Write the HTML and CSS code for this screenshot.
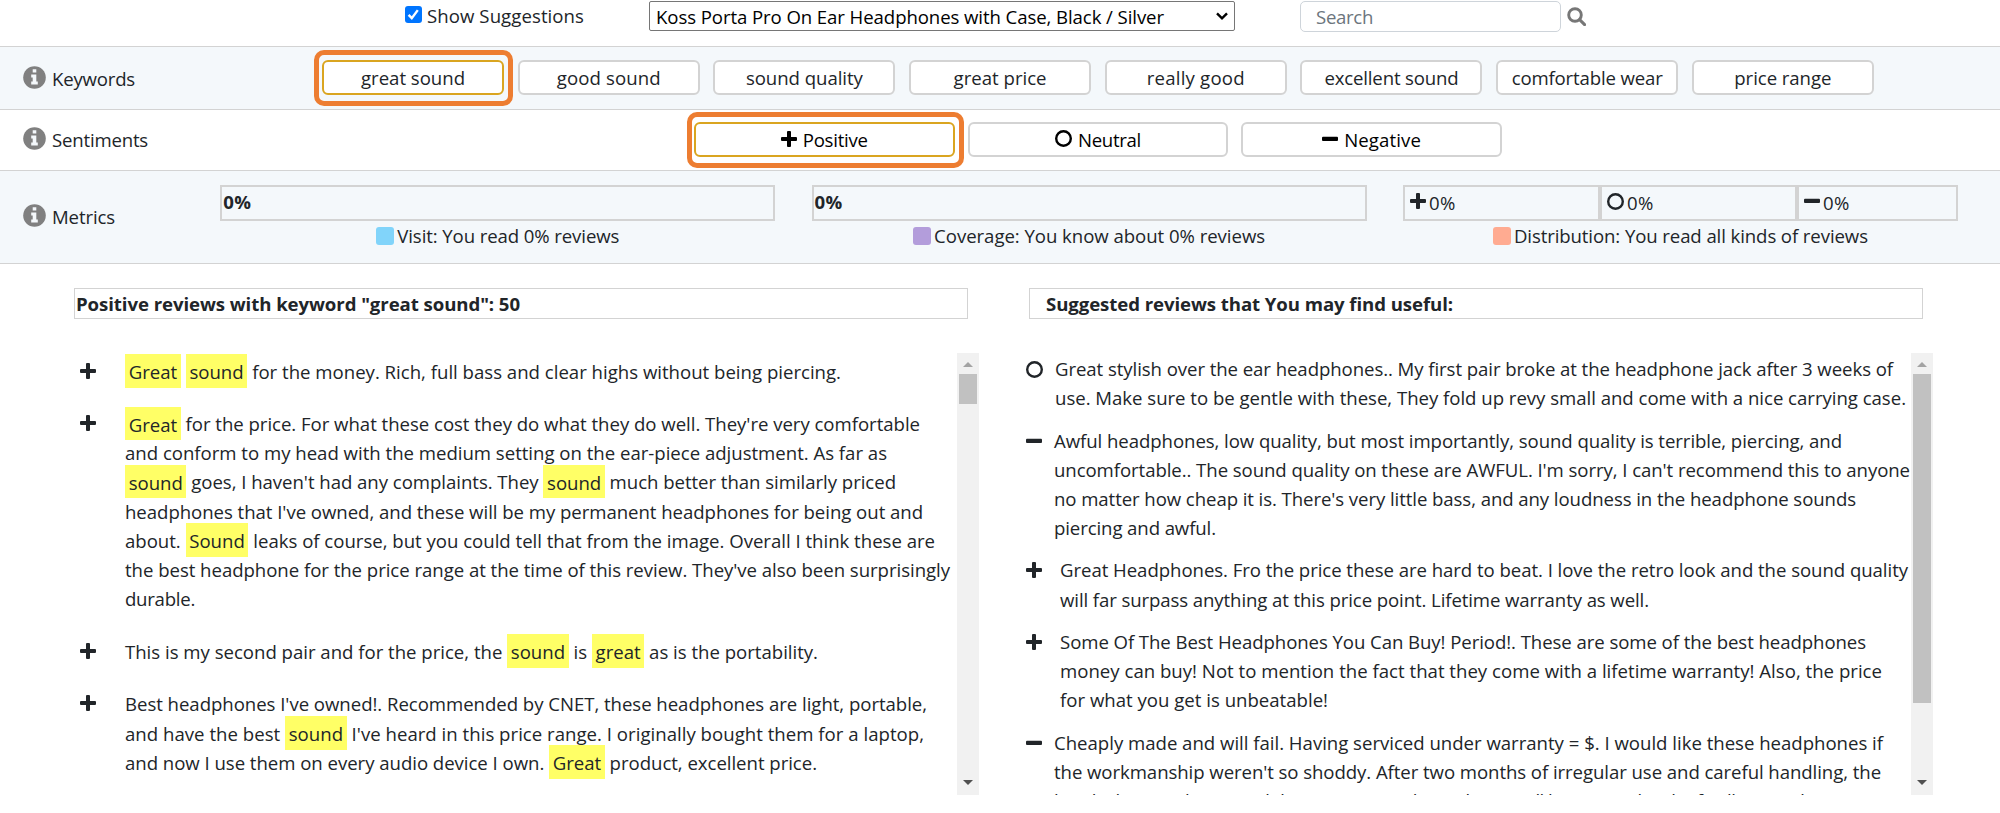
FILE: index.html
```html
<!DOCTYPE html>
<html lang="en">
<head>
<meta charset="utf-8">
<title>Review explorer</title>
<link rel="stylesheet" href="styles.css">
</head>
<body>
<svg class="defs" aria-hidden="true">
  <symbol id="info" viewBox="0 0 23 23"><circle cx="11.5" cy="11.5" r="11.3" fill="#808080"/><path d="M9.7 3.2h3.6v3.2H9.7zM8.2 8.6h5.1v7h1.5v2.8H8.2v-2.8h1.5v-4.2H8.2z" fill="#f4f8fb"/></symbol>
  <symbol id="plus" viewBox="0 0 16 16"><path d="M6 1a1 1 0 0 1 1-1h2a1 1 0 0 1 1 1v5h5a1 1 0 0 1 1 1v2a1 1 0 0 1-1 1h-5v5a1 1 0 0 1-1 1H7a1 1 0 0 1-1-1v-5H1a1 1 0 0 1-1-1V7a1 1 0 0 1 1-1h5z"/></symbol>
  <symbol id="minus" viewBox="0 0 16 16"><rect y="5.8" width="16" height="4.3" rx="1"/></symbol>
  <symbol id="ring" viewBox="0 0 17 17"><circle cx="8.5" cy="8.5" r="7.3" fill="none" stroke="currentColor" stroke-width="2.4"/></symbol>
</svg>

<header class="topbar">
  <label class="suggest"><span class="check"><svg viewBox="0 0 17 17"><path d="M3.6 8.8l3.2 3.3 6-8" fill="none" stroke="#fff" stroke-width="2.4"/></svg></span><span data-w="157">Show Suggestions</span></label>
  <div class="select"><span data-w="508">Koss Porta Pro On Ear Headphones with Case, Black / Silver</span><svg class="chev" viewBox="0 0 12 8"><path d="M1 1.3l5 5 5-5" fill="none" stroke="#000" stroke-width="2.4"/></svg></div>
  <div class="search"><span data-w="57">Search</span></div>
  <svg class="glass" viewBox="0 0 19 19"><circle cx="8" cy="8" r="6.3" fill="none" stroke="#777" stroke-width="2.9"/><path d="M12.6 12.6l5 5" stroke="#777" stroke-width="3" stroke-linecap="round"/></svg>
</header>

<section class="row tint keywords">
  <div class="label"><svg class="info"><use href="#info"/></svg><span data-w="83">Keywords</span></div>
  <div class="buttons">
    <div class="btn on"><span data-w="104">great sound</span></div>
    <div class="btn"><span data-w="104">good sound</span></div>
    <div class="btn"><span data-w="117">sound quality</span></div>
    <div class="btn"><span data-w="93">great price</span></div>
    <div class="btn"><span data-w="98">really good</span></div>
    <div class="btn"><span data-w="134">excellent sound</span></div>
    <div class="btn"><span data-w="151">comfortable wear</span></div>
    <div class="btn"><span data-w="97">price range</span></div>
  </div>
</section>

<section class="row sentiments">
  <div class="label"><svg class="info"><use href="#info"/></svg><span data-w="96">Sentiments</span></div>
  <div class="buttons wide">
    <div class="btn on"><svg class="ic"><use href="#plus"/></svg><span data-w="65">Positive</span></div>
    <div class="btn"><svg class="ic ring"><use href="#ring"/></svg><span data-w="63">Neutral</span></div>
    <div class="btn"><svg class="ic"><use href="#minus"/></svg><span data-w="77">Negative</span></div>
  </div>
</section>

<section class="row tint metrics">
  <div class="label"><svg class="info"><use href="#info"/></svg><span data-w="63">Metrics</span></div>
  <div class="metric">
    <div class="bar"><b data-w="28">0%</b></div>
    <div class="legend"><i class="sw blue"></i><span data-w="222">Visit: You read 0% reviews</span></div>
  </div>
  <div class="metric">
    <div class="bar"><b data-w="28">0%</b></div>
    <div class="legend"><i class="sw purple"></i><span data-w="331">Coverage: You know about 0% reviews</span></div>
  </div>
  <div class="metric">
    <div class="bar split">
      <div class="cell"><svg class="ic"><use href="#plus"/></svg><span data-w="27">0%</span></div>
      <div class="cell"><svg class="ic ring"><use href="#ring"/></svg><span data-w="27">0%</span></div>
      <div class="cell"><svg class="ic"><use href="#minus"/></svg><span data-w="27">0%</span></div>
    </div>
    <div class="legend"><i class="sw salmon"></i><span data-w="354">Distribution: You read all kinds of reviews</span></div>
  </div>
</section>

<main class="columns">
  <section class="col left">
    <h2><span data-w="444">Positive reviews with keyword "great sound": 50</span></h2>
    <div class="panel">
      <div class="list">
        <article><svg class="ic"><use href="#plus"/></svg><p>
          <span data-w="716"><mark>Great</mark> <mark>sound</mark> for the money. Rich, full bass and clear highs without being piercing.</span></p></article>
        <article><svg class="ic"><use href="#plus"/></svg><p>
          <span data-w="795"><mark>Great</mark> for the price. For what these cost they do what they do well. They're very comfortable</span>
          <span data-w="762">and conform to my head with the medium setting on the ear-piece adjustment. As far as</span>
          <span data-w="771"><mark>sound</mark> goes, I haven't had any complaints. They <mark>sound</mark> much better than similarly priced</span>
          <span data-w="798">headphones that I've owned, and these will be my permanent headphones for being out and</span>
          <span data-w="810">about. <mark>Sound</mark> leaks of course, but you could tell that from the image. Overall I think these are</span>
          <span data-w="825">the best headphone for the price range at the time of this review. They've also been surprisingly</span>
          <span data-w="70">durable.</span></p></article>
        <article><svg class="ic"><use href="#plus"/></svg><p>
          <span data-w="693">This is my second pair and for the price, the <mark>sound</mark> is <mark>great</mark> as is the portability.</span></p></article>
        <article><svg class="ic"><use href="#plus"/></svg><p>
          <span data-w="802">Best headphones I've owned!. Recommended by CNET, these headphones are light, portable,</span>
          <span data-w="799">and have the best <mark>sound</mark> I've heard in this price range. I originally bought them for a laptop,</span>
          <span data-w="692">and now I use them on every audio device I own. <mark>Great</mark> product, excellent price.</span></p></article>
      </div>
      <div class="scroll"><svg class="up" viewBox="0 0 10 5"><path d="M0 5l5-5 5 5z"/></svg><div class="thumb short"></div><svg class="down" viewBox="0 0 10 5"><path d="M0 0l5 5 5-5z"/></svg></div>
    </div>
  </section>
  <section class="col right">
    <h2><span data-w="407">Suggested reviews that You may find useful:</span></h2>
    <div class="panel">
      <div class="list">
        <article class="neu"><svg class="ic ring"><use href="#ring"/></svg><p>
          <span data-w="838">Great stylish over the ear headphones.. My first pair broke at the headphone jack after 3 weeks of</span>
          <span data-w="851">use. Make sure to be gentle with these, They fold up revy small and come with a nice carrying case.</span></p></article>
        <article class="neg"><svg class="ic"><use href="#minus"/></svg><p>
          <span data-w="788">Awful headphones, low quality, but most importantly, sound quality is terrible, piercing, and</span>
          <span data-w="856">uncomfortable.. The sound quality on these are AWFUL. I'm sorry, I can't recommend this to anyone</span>
          <span data-w="802">no matter how cheap it is. There's very little bass, and any loudness in the headphone sounds</span>
          <span data-w="162">piercing and awful.</span></p></article>
        <article><svg class="ic"><use href="#plus"/></svg><p>
          <span data-w="848">Great Headphones. Fro the price these are hard to beat. I love the retro look and the sound quality</span>
          <span data-w="589">will far surpass anything at this price point. Lifetime warranty as well.</span></p></article>
        <article><svg class="ic"><use href="#plus"/></svg><p>
          <span data-w="806">Some Of The Best Headphones You Can Buy! Period!. These are some of the best headphones</span>
          <span data-w="822">money can buy! Not to mention the fact that they come with a lifetime warranty! Also, the price</span>
          <span data-w="268">for what you get is unbeatable!</span></p></article>
        <article class="neg"><svg class="ic"><use href="#minus"/></svg><p>
          <span data-w="829">Cheaply made and will fail. Having serviced under warranty = $. I would like these headphones if</span>
          <span data-w="827">the workmanship weren't so shoddy. After two months of irregular use and careful handling, the</span>
          <span data-w="786">break, the mouth corner did a quite nice at the ends, a small base round in the finally a good one</span></p></article>
      </div>
      <div class="scroll"><svg class="up" viewBox="0 0 10 5"><path d="M0 5l5-5 5 5z"/></svg><div class="thumb long"></div><svg class="down" viewBox="0 0 10 5"><path d="M0 0l5 5 5-5z"/></svg></div>
    </div>
  </section>
</main>
<script src="fit.js"></script>
</body>
</html>
```
FILE: styles.css
```css
* { box-sizing: border-box; }
body {
  margin: 0;
  height: 813px;
  overflow: hidden;
  background: #fff;
  color: #212529;
  font: 18.6px/29.2px "Open Sans", "Noto Sans", sans-serif;
}
[data-w] { white-space: nowrap; }
.defs { position: absolute; width: 0; height: 0; }
.ic { width: 16px; height: 16px; flex: none; fill: currentColor; }
.ic.ring { width: 17px; height: 17px; }

.topbar { display: flex; height: 47px; padding-left: 405px; border-bottom: 1px solid #d3d3d3; }
.suggest { display: flex; width: 244px; height: 32px; }
.check { width: 17px; height: 17px; margin: 6px 5px 0 0; background: #0075ff; border-radius: 3px; flex: none; }
.check svg { display: block; width: 17px; height: 17px; }
.suggest span:last-child { margin-top: 1px; }
.select {
  display: flex; align-items: center; justify-content: space-between;
  width: 586px; height: 30px; margin-top: 1px; padding: 1px 6px 0 6px;
  border: 1px solid #767676; border-radius: 2px; color: #000;
}
.chev { width: 12px; height: 8px; margin-top: -2px; }
.search {
  width: 261px; height: 31px; margin: 1px 0 0 65px; padding: 0 0 0 15px;
  border: 1px solid #ced4da; border-radius: 5px; color: #6c757d;
}
.glass { width: 19px; height: 19px; margin: 7px 0 0 6px; }

.row { display: flex; border-bottom: 1px solid #d3d3d3; }
.tint { background: #f4f8fb; }
.label { display: flex; flex: none; padding-left: 23px; }
.info { width: 23px; height: 23px; margin-right: 6px; }
.keywords { height: 63px; }
.keywords .label { width: 322px; padding-top: 19px; }
.sentiments { height: 61px; }
.sentiments .label { width: 694px; padding-top: 17px; }
.label span { margin-top: -2px; }
.buttons { display: flex; gap: 13.7px; padding-top: 13px; }
.buttons.wide { gap: 13.2px; padding-top: 12px; }
.btn {
  position: relative;
  display: flex; align-items: center; justify-content: center; gap: 6px;
  width: 182px; height: 35px;
  border: 2px solid #d3d3d3; border-radius: 6px; background: #fff;
}
.wide .btn { width: 260.5px; color: #000; }
.btn .ic { margin-top: -2px; }
.btn.on { border-color: #daa520; }
.btn.on::after { content: ""; position: absolute; inset: -12px -11px -13px -10px; border: 5px solid #ed7d31; border-radius: 10px; }
.wide .btn.on::after { inset: -12px -11px -13px -9px; }

.metrics { height: 93px; gap: 36.3px; }
.metrics .label { width: 184px; padding-top: 33px; }
.metric { width: 555px; padding-top: 14px; }
.bar { display: flex; height: 36px; border: 2px solid #d3d3d3; padding-left: 1px; line-height: 30px; }
.bar.split { padding: 0; border: 0; }
.cell { display: flex; gap: 3px; width: 197px; padding-left: 5px; border: 2px solid #d3d3d3; line-height: 31px; }
.cell:last-child { width: 161px; }
.cell .ic { margin-top: 6px; }
.legend { display: flex; justify-content: center; gap: 3px; height: 29px; }
.sw { width: 18px; height: 18px; margin-top: 6px; border-radius: 3px; flex: none; }
.blue { background: #81d4fa; }
.purple { background: #b39ddb; }
.salmon { background: #ffab91; }

.columns { display: flex; padding: 24px 0 0 74px; }
.col { width: 955px; }
h2 { width: 894px; height: 31px; margin: 0 0 34px; padding-left: 1px; border: 1px solid #d3d3d3; font: bold 18.6px/29.2px "Open Sans", "Noto Sans", sans-serif; }
.right h2 { padding-left: 16px; }
.panel { display: flex; height: 442px; }
.list { width: 883px; overflow: hidden; padding-top: 3.5px; }
.left .list { padding-left: 6px; }
article { display: flex; margin-bottom: 23.4px; }
.right article { margin-bottom: 13.2px; }
article .ic { margin: 6px 29px 0 0; }
.right article .ic { margin: 7px 18px 0 -3px; }
.right .list { margin-left: -3px; width: 885px; padding: .7px 0 0 3px; }
.right .neu { margin-bottom: 13.8px; }
.right .neu .ic { margin-right: 12px; }
.right .neg .ic { margin-right: 12px; }
.right .neg { margin-bottom: 12.8px; }
p { margin: 0; }
p > span { display: block; width: max-content; height: 29.2px; }
mark { display: inline-block; height: 33.5px; margin: -5px 0; padding: 3px 3.7px 0; background: #ff6; color: #212529; vertical-align: -0.5px; }
.scroll { display: flex; flex-direction: column; align-items: center; width: 22px; background: #f1f1f1; }
.scroll svg { width: 10px; height: 5px; }
.up { margin: 9px 0 7px; fill: #a3a3a3; }
.down { margin: auto 0 10px; fill: #505050; }
.thumb { width: 18px; background: #c1c1c1; }
.short { height: 30px; }
.long { height: 329px; }
```
FILE: fit.js
```javascript
// Track each text run so that it spans its nominal measure.
document.querySelectorAll('[data-w]').forEach(function (el) {
  var range = document.createRange();
  range.selectNodeContents(el);
  var width = range.getBoundingClientRect().width;
  var count = el.textContent.length;
  el.style.letterSpacing = ((parseFloat(el.dataset.w) - width) / count) + 'px';
});
```
